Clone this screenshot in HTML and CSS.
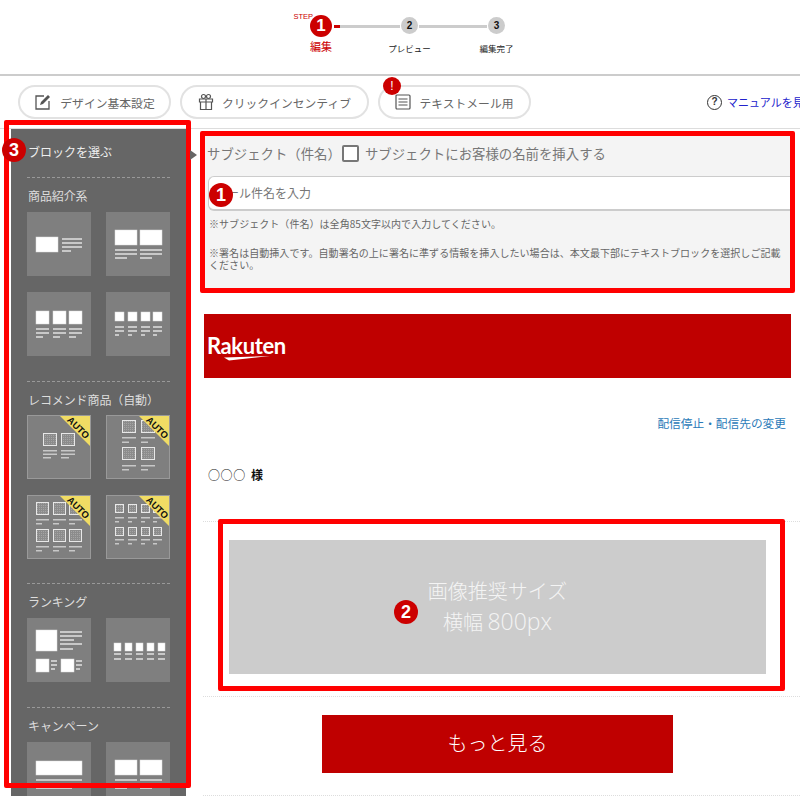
FILE: index.html
```html
<!DOCTYPE html>
<html lang="ja">
<head>
  <meta charset="UTF-8" />
  <title>メール編集</title>
  <link rel="stylesheet" href="styles.css">
</head>
<body>
  <svg class="defs" width="0" height="0">
    <defs>
      <pattern id="dots" width="2" height="2" patternUnits="userSpaceOnUse">
        <rect width="2" height="2" fill="#8c8c8c"/>
        <rect width="1" height="1" fill="#a5a5a5"/>
      </pattern>
      <symbol id="t1" viewBox="0 0 64 64">
        <g class="im"><rect x="9" y="25" width="22" height="15"/></g>
        <g class="ln"><rect x="35" y="26" width="20" height="2"/><rect x="35" y="30" width="20" height="2"/><rect x="35" y="34" width="20" height="2"/><rect x="35" y="38" width="9" height="2"/></g>
      </symbol>
      <symbol id="t2" viewBox="0 0 64 64">
        <g class="im"><rect x="9" y="18" width="22" height="15"/><rect x="34" y="18" width="22" height="15"/></g>
        <g class="ln"><rect x="9" y="37" width="22" height="2"/><rect x="9" y="41" width="22" height="2"/><rect x="9" y="45" width="12" height="2"/><rect x="34" y="37" width="22" height="2"/><rect x="34" y="41" width="22" height="2"/><rect x="34" y="45" width="12" height="2"/></g>
      </symbol>
      <symbol id="t3" viewBox="0 0 64 64">
        <g class="im"><rect x="9" y="19" width="13" height="13"/><rect x="26" y="19" width="13" height="13"/><rect x="42" y="19" width="13" height="13"/></g>
        <g class="ln"><rect x="9" y="36" width="13" height="2"/><rect x="9" y="40" width="13" height="2"/><rect x="9" y="44" width="7" height="2"/><rect x="26" y="36" width="13" height="2"/><rect x="26" y="40" width="13" height="2"/><rect x="26" y="44" width="7" height="2"/><rect x="42" y="36" width="13" height="2"/><rect x="42" y="40" width="13" height="2"/><rect x="42" y="44" width="7" height="2"/></g>
      </symbol>
      <symbol id="t4" viewBox="0 0 64 64">
        <g class="im"><rect x="9" y="20" width="9" height="9"/><rect x="22" y="20" width="9" height="9"/><rect x="35" y="20" width="9" height="9"/><rect x="47" y="20" width="9" height="9"/></g>
        <g class="ln"><rect x="9" y="34" width="9" height="2"/><rect x="9" y="38" width="9" height="2"/><rect x="9" y="42" width="4" height="2"/><rect x="22" y="34" width="9" height="2"/><rect x="22" y="38" width="9" height="2"/><rect x="22" y="42" width="4" height="2"/><rect x="35" y="34" width="9" height="2"/><rect x="35" y="38" width="9" height="2"/><rect x="35" y="42" width="4" height="2"/><rect x="47" y="34" width="9" height="2"/><rect x="47" y="38" width="9" height="2"/><rect x="47" y="42" width="4" height="2"/></g>
      </symbol>
      <symbol id="a1" viewBox="0 0 64 64">
        <g class="ph"><rect x="16.500" y="18.500" width="13" height="12"/><rect x="34.500" y="18.500" width="13" height="12"/></g>
        <g class="ln"><rect x="16" y="35" width="14" height="1.500"/><rect x="16" y="38.500" width="14" height="1.500"/><rect x="16" y="42" width="8" height="1.500"/><rect x="34" y="35" width="14" height="1.500"/><rect x="34" y="38.500" width="14" height="1.500"/><rect x="34" y="42" width="8" height="1.500"/></g>
      </symbol>
      <symbol id="a2" viewBox="0 0 64 64">
        <g class="ph"><rect x="16.500" y="5.500" width="13" height="12"/><rect x="35.500" y="5.500" width="13" height="12"/><rect x="16.500" y="32.500" width="13" height="12"/><rect x="35.500" y="32.500" width="13" height="12"/></g>
        <g class="ln"><rect x="16" y="22" width="14" height="1.500"/><rect x="16" y="26.500" width="7" height="1.500"/><rect x="35" y="22" width="14" height="1.500"/><rect x="35" y="26.500" width="7" height="1.500"/><rect x="16" y="50" width="14" height="1.500"/><rect x="16" y="54" width="7" height="1.500"/><rect x="35" y="50" width="14" height="1.500"/><rect x="35" y="54" width="7" height="1.500"/></g>
      </symbol>
      <symbol id="a3" viewBox="0 0 64 64">
        <g class="ph"><rect x="9.500" y="7.500" width="12" height="12"/><rect x="26.500" y="7.500" width="12" height="12"/><rect x="42.500" y="7.500" width="12" height="12"/><rect x="9.500" y="34.500" width="12" height="12"/><rect x="26.500" y="34.500" width="12" height="12"/><rect x="42.500" y="34.500" width="12" height="12"/></g>
        <g class="ln"><rect x="9" y="24" width="13" height="1.500"/><rect x="9" y="28" width="6" height="1.500"/><rect x="26" y="24" width="13" height="1.500"/><rect x="26" y="28" width="6" height="1.500"/><rect x="42" y="24" width="13" height="1.500"/><rect x="42" y="28" width="6" height="1.500"/><rect x="9" y="51" width="13" height="1.500"/><rect x="9" y="55" width="6" height="1.500"/><rect x="26" y="51" width="13" height="1.500"/><rect x="26" y="55" width="6" height="1.500"/><rect x="42" y="51" width="13" height="1.500"/><rect x="42" y="55" width="6" height="1.500"/></g>
      </symbol>
      <symbol id="a4" viewBox="0 0 64 64">
        <g class="ph"><rect x="9.500" y="9.500" width="8" height="8"/><rect x="22.500" y="9.500" width="8" height="8"/><rect x="35.500" y="9.500" width="8" height="8"/><rect x="47.500" y="9.500" width="8" height="8"/><rect x="9.500" y="32.500" width="8" height="8"/><rect x="22.500" y="32.500" width="8" height="8"/><rect x="35.500" y="32.500" width="8" height="8"/><rect x="47.500" y="32.500" width="8" height="8"/></g>
        <g class="ln"><rect x="9" y="22" width="9" height="1.500"/><rect x="9" y="26" width="4" height="1.500"/><rect x="22" y="22" width="9" height="1.500"/><rect x="22" y="26" width="4" height="1.500"/><rect x="35" y="22" width="9" height="1.500"/><rect x="35" y="26" width="4" height="1.500"/><rect x="47" y="22" width="9" height="1.500"/><rect x="47" y="26" width="4" height="1.500"/><rect x="9" y="44" width="9" height="1.500"/><rect x="9" y="48" width="4" height="1.500"/><rect x="22" y="44" width="9" height="1.500"/><rect x="22" y="48" width="4" height="1.500"/><rect x="35" y="44" width="9" height="1.500"/><rect x="35" y="48" width="4" height="1.500"/><rect x="47" y="44" width="9" height="1.500"/><rect x="47" y="48" width="4" height="1.500"/></g>
      </symbol>
      <symbol id="r1" viewBox="0 0 64 64">
        <g class="im"><rect x="9" y="12" width="21" height="21"/><rect x="9" y="41" width="13" height="13"/><rect x="34" y="41" width="13" height="13"/></g>
        <g class="ln"><rect x="33" y="13" width="22" height="2"/><rect x="33" y="17" width="22" height="2"/><rect x="33" y="21" width="14" height="2"/><rect x="33" y="25" width="22" height="2"/><rect x="33" y="30" width="13" height="2"/><rect x="24" y="42" width="6" height="2"/><rect x="24" y="46" width="6" height="2"/><rect x="24" y="50" width="4" height="2"/><rect x="49" y="42" width="6" height="2"/><rect x="49" y="46" width="6" height="2"/><rect x="49" y="50" width="4" height="2"/></g>
      </symbol>
      <symbol id="r2" viewBox="0 0 64 64">
        <g class="im"><rect x="8" y="25" width="7" height="8"/><rect x="19" y="25" width="7" height="8"/><rect x="30" y="25" width="7" height="8"/><rect x="41" y="25" width="7" height="8"/><rect x="52" y="25" width="7" height="8"/></g>
        <g class="ln"><rect x="8" y="35" width="7" height="2"/><rect x="8" y="40" width="7" height="2"/><rect x="19" y="35" width="7" height="2"/><rect x="19" y="40" width="7" height="2"/><rect x="30" y="35" width="7" height="2"/><rect x="30" y="40" width="7" height="2"/><rect x="41" y="35" width="7" height="2"/><rect x="41" y="40" width="7" height="2"/><rect x="52" y="35" width="7" height="2"/><rect x="52" y="40" width="7" height="2"/></g>
      </symbol>
      <symbol id="c1" viewBox="0 0 64 64">
        <g class="im"><rect x="9" y="19" width="46" height="14"/></g>
        <g class="ln"><rect x="9" y="37" width="46" height="2"/><rect x="9" y="41" width="46" height="2"/><rect x="9" y="45" width="36" height="2"/></g>
      </symbol>
      <symbol id="auto" viewBox="0 0 64 64">
        <polygon points="32,0 64,0 64,32" fill="#f0dc64"/>
        <text transform="translate(49 15) rotate(45)" class="auto-label" text-anchor="middle">AUTO</text>
      </symbol>
    </defs>
  </svg>

  <header class="top">
    <ol class="steps">
      <li class="step step-on">
        <span class="step-tag">STEP</span>
        <span class="step-num">1</span>
        <span class="step-name">編集</span>
      </li>
      <li class="step step-two">
        <span class="step-num">2</span>
        <span class="step-name">プレビュー</span>
      </li>
      <li class="step step-three">
        <span class="step-num">3</span>
        <span class="step-name">編集完了</span>
      </li>
    </ol>
  </header>

  <nav class="tabs">
    <a class="tab tab-design">
      <svg width="18" height="18" viewBox="0 0 18 18" fill="none" stroke="#555" stroke-width="1.300"><path d="M10 3H2v13h13V8"/><path d="M6 12l1-3 7-7 2 2-7 7z" fill="#555" stroke="none"/></svg>
      デザイン基本設定
    </a>
    <a class="tab tab-click">
      <svg width="16" height="18" viewBox="0 0 16 18" fill="none" stroke="#555" stroke-width="1.200"><path d="M1.500 6h13v3h-13zM2.500 9v7.500h11V9M8 6v10.500"/><circle cx="5.500" cy="3.500" r="2"/><circle cx="10.500" cy="3.500" r="2"/></svg>
      クリックインセンティブ
    </a>
    <a class="tab tab-text">
      <span class="tab-alert">!</span>
      <svg width="16" height="16" viewBox="0 0 16 16" fill="none" stroke="#555" stroke-width="1.200"><rect x="1" y="1" width="14" height="14" rx="1"/><path d="M3.500 5h9M3.500 8h9M3.500 11h9"/></svg>
      テキストメール用
    </a>
    <a class="manual">
      <span class="manual-icon">?</span>
      <span class="manual-text">マニュアルを見る</span>
    </a>
  </nav>

  <div class="work">
    <aside class="side">
      <h2 class="side-title">ブロックを選ぶ</h2>

      <section class="group">
        <h3>商品紹介系</h3>
        <div class="tiles">
          <svg class="tile"><use href="#t1"/></svg>
          <svg class="tile"><use href="#t2"/></svg>
          <svg class="tile"><use href="#t3"/></svg>
          <svg class="tile"><use href="#t4"/></svg>
        </div>
      </section>

      <section class="group group-auto">
        <h3>レコメンド商品（自動）</h3>
        <div class="tiles">
          <svg class="tile tile-auto"><use href="#a1"/><use href="#auto"/></svg>
          <svg class="tile tile-auto"><use href="#a2"/><use href="#auto"/></svg>
          <svg class="tile tile-auto"><use href="#a3"/><use href="#auto"/></svg>
          <svg class="tile tile-auto"><use href="#a4"/><use href="#auto"/></svg>
        </div>
      </section>

      <section class="group">
        <h3>ランキング</h3>
        <div class="tiles">
          <svg class="tile"><use href="#r1"/></svg>
          <svg class="tile"><use href="#r2"/></svg>
        </div>
      </section>

      <section class="group">
        <h3>キャンペーン</h3>
        <div class="tiles">
          <svg class="tile"><use href="#c1"/></svg>
          <svg class="tile"><use href="#t2"/></svg>
        </div>
      </section>
      <span class="side-frame"></span>
      <span class="badge badge-three">3</span>
      <span class="side-arrow"></span>
    </aside>

    <main class="mail">
      <section class="subject">
        <div class="subject-head">
          サブジェクト（件名）
          <span class="check"></span>
          サブジェクトにお客様の名前を挿入する
        </div>
        <div class="subject-input">メール件名を入力</div>
        <p class="note note-first">※サブジェクト（件名）は全角85文字以内で入力してください。</p>
        <p class="note">※署名は自動挿入です。自動署名の上に署名に準ずる情報を挿入したい場合は、本文最下部にテキストブロックを選択しご記載<br>ください。</p>
        <span class="badge badge-one">1</span>
      </section>

      <div class="banner">
        <span class="logo">Rakuten</span>
        <svg class="logo-swoosh" width="46" height="6" viewBox="0 0 46 6"><path d="M0 1.500L46 0 5 4.500z" fill="#fff"/></svg>
      </div>
      <p class="unsub">配信停止・配信先の変更</p>
      <p class="name">○○○ <b>様</b></p>

      <section class="row-image">
        <div class="callout">
          <div class="placeholder">
            <span>画像推奨サイズ</span>
            <span>横幅 <span class="size">800px</span></span>
          </div>
          <span class="badge badge-two">2</span>
        </div>
      </section>

      <section class="row-button">
        <a class="more">もっと見る</a>
      </section>
    </main>
  </div>
</body>
</html>
```

FILE: styles.css
```css
* {
  box-sizing: border-box;
}
html, body {
  height: 796px;
  overflow: hidden;
}
body {
  margin: 0;
  background: #fff;
  color: #666;
  font-family: "Noto Sans CJK JP", "Noto Sans", sans-serif;
  font-size: 12px;
}
.defs {
  position: absolute;
}

/* step indicator */
.top {
  height: 76px;
  border-bottom: 2px solid #ccc;
}
.steps {
  display: flex;
  margin: 0;
  padding: 15px 0 0 310px;
  list-style: none;
}
.step {
  position: relative;
  display: flex;
  flex-direction: column;
  align-items: center;
  width: 17px;
  padding-top: 2px;
  color: #222;
  font-size: 8.500px;
}
.step-num {
  width: 17px;
  height: 17px;
  border-radius: 50%;
  background: #ccc;
  color: #111;
  font: bold 10px/17px "Liberation Sans", sans-serif;
  text-align: center;
}
.step-name {
  margin-top: 7px;
  line-height: 14px;
  white-space: nowrap;
}
.step-on {
  width: 22px;
  padding-top: 0;
  color: #c00;
  font-size: 11px;
}
.step-on .step-num {
  width: 22px;
  height: 22px;
  background: #c00;
  color: #fff;
  font: bold 17px/22px "Liberation Sans", sans-serif;
}
.step-on .step-name {
  margin-top: 2px;
}
.step-two {
  margin-left: 69px;
}
.step-three {
  margin-left: 70px;
}
.step-two::before, .step-three::before {
  content: "";
  position: absolute;
  top: 10px;
  right: 18px;
  height: 3px;
  background: #ccc;
}
.step-two::before {
  width: 60px;
}
.step-three::before {
  width: 68px;
}
.step-on::after {
  content: "";
  position: absolute;
  top: 10px;
  left: 24px;
  width: 6px;
  height: 3px;
  background: #c00;
}
.step-tag {
  position: absolute;
  top: -3px;
  right: 19px;
  color: #c00;
  font: 7.500px/10px "Liberation Sans", sans-serif;
}

/* tab row */
.tabs {
  display: flex;
  align-items: flex-start;
  height: 53px;
  padding: 9px 0 0 18px;
  border-bottom: 1px solid #ddd;
  white-space: nowrap;
}
.tab {
  position: relative;
  flex: none;
  display: flex;
  align-items: center;
  justify-content: center;
  gap: 8px;
  height: 34px;
  margin-right: 9px;
  border: 2px solid #e2e2e2;
  border-radius: 18px;
  color: #666;
  font-size: 11.800px;
}
.tab-design { width: 153px; }
.tab-click { width: 189px; }
.tab-text { width: 153px; }
.tab-alert {
  position: absolute;
  top: -10px;
  left: 3px;
  width: 18px;
  height: 18px;
  border-radius: 50%;
  background: #c00;
  color: #fff;
  font: 12px/18px "Liberation Sans", sans-serif;
  text-align: center;
}
.manual {
  display: flex;
  align-items: center;
  gap: 5px;
  flex: none;
  margin-left: 167px;
  margin-top: 9px;
}
.manual-icon {
  width: 15px;
  height: 15px;
  border: 1.500px solid #333;
  border-radius: 50%;
  color: #333;
  font: bold 10px/12px "Liberation Sans", sans-serif;
  text-align: center;
}
.manual-text {
  color: #22c;
  font-size: 11px;
}

/* layout under the tabs */
.work {
  display: flex;
  height: 667px;
}

/* block picker */
.side {
  position: relative;
  flex: none;
  width: 175px;
  margin-left: 11px;
  padding: 0 16px;
  background: #666;
  color: #ddd;
}
.side-title {
  margin: 15px 0 0 1px;
  color: #eee;
  font-size: 12px;
  font-weight: 400;
  line-height: 16px;
}
.group {
  margin-top: 17px;
  padding-top: 10px;
  border-top: 1px dashed #999;
}
.group + .group {
  margin-top: 25px;
}
.group h3 {
  margin: 0 0 8px 1px;
  font-size: 12px;
  font-weight: 400;
  line-height: 16px;
  letter-spacing: -.1px;
}
.group-auto {
  margin-bottom: -1px;
}
.group-auto h3 {
  margin-bottom: 7px;
}
.tiles {
  display: grid;
  grid-template-columns: 64px 64px;
  gap: 16px 15px;
}
.tile {
  display: block;
  width: 64px;
  height: 64px;
  background: #7f7f7f;
}
.tile-auto {
  outline: 1px solid #999;
  outline-offset: -1px;
}
.tile use {
  width: 64px;
  height: 64px;
}
.im rect {
  fill: #fff;
  stroke: #ddd;
  stroke-width: .5;
}
.ln rect {
  fill: #c8c8c8;
}
.ph rect {
  fill: url(#dots);
  stroke: #e8e8e8;
  stroke-width: 1;
}
.auto-label {
  font: bold 9.500px "Liberation Sans", sans-serif;
  fill: #111;
}
.side-frame {
  position: absolute;
  top: -9px;
  left: -7px;
  width: 187px;
  height: 668px;
  border: 5px solid #f00;
  border-radius: 2px;
}
.side-arrow {
  position: absolute;
  top: 21px;
  left: 179px;
  border-left: 7px solid #666;
  border-top: 5px solid transparent;
  border-bottom: 5px solid transparent;
}

/* numbered markers */
.badge {
  position: absolute;
  width: 24px;
  height: 24px;
  border-radius: 50%;
  background: #c00;
  color: #fff;
  font: bold 18px/24px "Liberation Sans", sans-serif;
  text-align: center;
}
.badge-three {
  top: 9px;
  left: -9px;
}
.badge-one {
  top: 47px;
  left: 4px;
}
.badge-two {
  top: 76px;
  left: 171px;
}

/* mail body */
.mail {
  flex: none;
  width: 600px;
  margin-left: 14px;
}
.subject {
  position: relative;
  width: 595px;
  height: 162px;
  margin-top: 2px;
  border: 5px solid #f00;
  border-radius: 2px;
  background: #f4f4f4;
}
.subject-head {
  display: flex;
  align-items: center;
  gap: 6px;
  height: 40px;
  padding: 0 0 6px 2px;
  color: #777;
  font-size: 13.400px;
  white-space: nowrap;
}
.check {
  width: 17px;
  height: 17px;
  margin-left: -5px;
  border: 2px solid #777;
  border-radius: 2px;
  background: #fff;
}
.subject-input {
  height: 35px;
  margin-left: 3px;
  padding-left: 6px;
  border: 1px solid #ccc;
  border-right: 0;
  border-bottom-width: 2px;
  border-radius: 6px 0 0 6px;
  background: #fff;
  color: #777;
  font-size: 12px;
  line-height: 31px;
}
.note {
  margin: 0 0 0 4px;
  color: #666;
  font-size: 10px;
  line-height: 12px;
  letter-spacing: .05px;
  white-space: nowrap;
}
.note-first {
  margin-top: 7px;
  margin-bottom: 17px;
}
.banner {
  position: relative;
  display: flex;
  align-items: center;
  width: 587px;
  height: 64px;
  margin: 21px 0 0 4px;
  padding-left: 3px;
  background: #bf0000;
}
.logo {
  color: #fff;
  font: 700 22px/24px Lato, sans-serif;
  letter-spacing: -.4px;
}
.logo-swoosh {
  position: absolute;
  top: 42px;
  left: 20px;
}
.unsub {
  margin: 37px 0 0;
  padding-right: 14px;
  color: #2a7ab8;
  font-size: 11.700px;
  line-height: 16px;
  text-align: right;
}
.name {
  margin: 36px 0 0 8px;
  color: #111;
  font-size: 12px;
  line-height: 16px;
  letter-spacing: .6px;
}
.name b {
  margin-left: 2px;
}
.row-image {
  margin-top: 38px;
  margin-left: 3px;
  padding-bottom: 5px;
  border-top: 1px dotted #ddd;
  border-bottom: 1px dotted #ddd;
}
.callout {
  position: relative;
  width: 567px;
  height: 172px;
  margin: -3px 0 0 15px;
  padding: 16px 14px 12px 6px;
  border: 5px solid #f00;
  border-radius: 2px;
  background: #fff;
}
.placeholder {
  display: flex;
  flex-direction: column;
  justify-content: center;
  height: 134px;
  padding-bottom: 2px;
  background: #ccc;
  color: #f4f4f4;
  font-size: 20px;
  font-weight: 300;
  line-height: 31px;
  text-align: center;
}
.size {
  font: 300 23px/31px "Open Sans", sans-serif;
}
.row-button {
  margin-left: 3px;
  padding: 18px 0 22px 119px;
  border-bottom: 1px dotted #ddd;
}
.more {
  display: block;
  width: 351px;
  height: 58px;
  background: #bf0000;
  color: #fff;
  font-size: 20px;
  font-weight: 300;
  line-height: 56px;
  text-align: center;
}
```
